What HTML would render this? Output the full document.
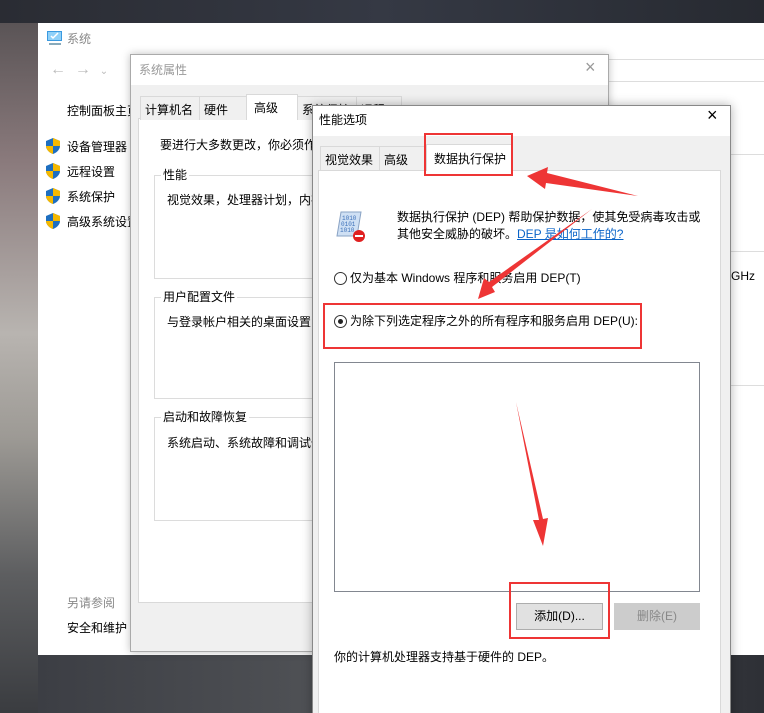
<!DOCTYPE html>
<html style="width:764px;height:713px;overflow:hidden"><head><meta charset="utf-8"><style>
*{margin:0;padding:0;box-sizing:border-box}
body{width:764px;height:713px;overflow:hidden;position:relative;font-family:"Liberation Sans","Noto Sans CJK SC",sans-serif;font-size:12px;color:#000;background:#2b2e36}
.a{position:absolute}
.t{position:absolute;white-space:nowrap;line-height:14px}
.bx{position:absolute;border:1px solid #dcdcdc}
.lg{position:absolute;background:#fff;padding:0 2px;line-height:14px;top:-8px;left:6px}
.tab{position:absolute;height:24px;border:1px solid #d9d9d9;border-bottom:none;background:#f0f0f0;padding:4px 4px 0;white-space:nowrap;font-size:12px}
.red{position:absolute;border:2px solid #ee3535}
.sh{position:absolute;width:14px;height:16px}
</style></head><body>
<div class="a" style="left:0;top:0;width:764px;height:23px;background:linear-gradient(90deg,#2a2c33,#353944 50%,#272a31)"></div>
<div class="a" style="left:0;top:23px;width:38px;height:690px;background:linear-gradient(180deg,#5a5456 0%,#8a7a7c 20%,#b8b4b0 45%,#9d9a95 60%,#5d5e60 80%,#3a3c40 100%)"></div>
<div class="a" style="left:38px;top:655px;width:726px;height:58px;background:linear-gradient(90deg,#3c3e44,#505256 40%,#2e3036)"></div>
<div class="a" style="left:38px;top:23px;width:726px;height:632px;background:#fff"></div>
<svg class="a" style="left:46px;top:30px" width="18" height="16"><rect x="1" y="1" width="15" height="10" fill="#3b9ae0"/><rect x="2" y="2" width="13" height="8" fill="#8fd0f8"/><path d="M5 6l2 2 5-5" stroke="#fff" stroke-width="1.5" fill="none"/><rect x="3" y="13" width="12" height="2" fill="#8ab"/></svg>
<div class="t" style="left:67px;top:32px;color:#888">系统</div>
<div class="t" style="left:50px;top:63px;color:#bbb;font-size:16px">← &nbsp;→ &nbsp;<span style="font-size:10px">⌄</span></div>
<div class="t" style="left:67px;top:104px;color:#000">控制面板主页</div>
<div class="t" style="left:67px;top:140px">设备管理器</div>
<div class="t" style="left:67px;top:165px">远程设置</div>
<div class="t" style="left:67px;top:190px">系统保护</div>
<div class="t" style="left:67px;top:215px">高级系统设置</div>
<svg class="sh" style="left:46px;top:138px"><path d="M7 0L14 3V8C14 12 10 15 7 16C4 15 0 12 0 8V3Z" fill="#1e6fc0"/><path d="M7 0V8H14V3Z M0 8H7V16C4 15 0 12 0 8Z" fill="#f5b800"/></svg>
<svg class="sh" style="left:46px;top:163px"><path d="M7 0L14 3V8C14 12 10 15 7 16C4 15 0 12 0 8V3Z" fill="#1e6fc0"/><path d="M7 0V8H14V3Z M0 8H7V16C4 15 0 12 0 8Z" fill="#f5b800"/></svg>
<svg class="sh" style="left:46px;top:188px"><path d="M7 0L14 3V8C14 12 10 15 7 16C4 15 0 12 0 8V3Z" fill="#1e6fc0"/><path d="M7 0V8H14V3Z M0 8H7V16C4 15 0 12 0 8Z" fill="#f5b800"/></svg>
<svg class="sh" style="left:46px;top:213px"><path d="M7 0L14 3V8C14 12 10 15 7 16C4 15 0 12 0 8V3Z" fill="#1e6fc0"/><path d="M7 0V8H14V3Z M0 8H7V16C4 15 0 12 0 8Z" fill="#f5b800"/></svg>
<div class="t" style="left:67px;top:596px;color:#888">另请参阅</div>
<div class="t" style="left:67px;top:621px">安全和维护</div>
<div class="a" style="left:608px;top:59px;width:156px;height:1px;background:#ddd"></div>
<div class="a" style="left:608px;top:81px;width:156px;height:1px;background:#ddd"></div>
<div class="a" style="left:731px;top:154px;width:33px;height:1px;background:#ddd"></div>
<div class="a" style="left:731px;top:251px;width:33px;height:1px;background:#ddd"></div>
<div class="a" style="left:731px;top:385px;width:33px;height:1px;background:#ddd"></div>
<div class="t" style="left:731px;top:269px">GHz</div>
<div class="a" style="left:130px;top:54px;width:479px;height:598px;background:#f0f0f0;border:1px solid #aaa;box-shadow:0 0 8px rgba(0,0,0,.25)"></div>
<div class="a" style="left:131px;top:55px;width:477px;height:30px;background:#fff"></div>
<div class="t" style="left:139px;top:63px;color:#999">系统属性</div>
<div class="t" style="left:585px;top:60px;color:#999;font-size:18px">×</div>
<div class="a" style="left:138px;top:118px;width:470px;height:485px;background:#fff;border:1px solid #d9d9d9"></div>
<div class="tab" style="left:140px;top:96px;width:60px">计算机名</div>
<div class="tab" style="left:199px;top:96px;width:48px">硬件</div>
<div class="tab" style="left:246px;top:94px;width:52px;height:25px;background:#fff;padding-left:7px">高级</div>
<div class="tab" style="left:297px;top:96px;width:60px">系统保护</div>
<div class="tab" style="left:356px;top:96px;width:46px">远程</div>
<div class="t" style="left:160px;top:138px">要进行大多数更改，你必须作为管理员登录。</div>
<div class="bx" style="left:154px;top:175px;width:170px;height:104px"><span class="lg">性能</span></div>
<div class="t" style="left:167px;top:193px">视觉效果，处理器计划，内存使用</div>
<div class="bx" style="left:154px;top:297px;width:170px;height:102px"><span class="lg">用户配置文件</span></div>
<div class="t" style="left:167px;top:315px">与登录帐户相关的桌面设置</div>
<div class="bx" style="left:154px;top:417px;width:170px;height:104px"><span class="lg">启动和故障恢复</span></div>
<div class="t" style="left:167px;top:436px">系统启动、系统故障和调试信息</div>
<div class="a" style="left:312px;top:105px;width:419px;height:620px;background:#f0f0f0;border:1px solid #888;box-shadow:0 0 10px rgba(0,0,0,.3)"></div>
<div class="a" style="left:313px;top:106px;width:417px;height:30px;background:#fff"></div>
<div class="t" style="left:319px;top:113px">性能选项</div>
<div class="t" style="left:707px;top:108px;font-size:18px">×</div>
<div class="a" style="left:318px;top:170px;width:403px;height:560px;background:#fff;border:1px solid #d9d9d9"></div>
<div class="tab" style="left:320px;top:146px;width:60px">视觉效果</div>
<div class="tab" style="left:379px;top:146px;width:48px">高级</div>
<div class="tab" style="left:426px;top:144px;width:86px;height:27px;background:#fff;padding-top:5px;padding-left:7px">数据执行保护</div>
<svg class="a" style="left:333px;top:210px" width="36" height="34"><path d="M8 2H28L24 26H4Z" fill="#cfe0f4" stroke="#8aa3c4"/><text x="9" y="10" font-size="6" fill="#3b6fb8" font-family="Liberation Mono">1010</text><text x="8" y="16" font-size="6" fill="#3b6fb8" font-family="Liberation Mono">0101</text><text x="7" y="22" font-size="6" fill="#3b6fb8" font-family="Liberation Mono">1010</text><circle cx="26" cy="26" r="6" fill="#e02020"/><rect x="22" y="25" width="8" height="2" fill="#fff"/></svg>
<div class="t" style="left:397px;top:209px;line-height:17px">数据执行保护 (DEP) 帮助保护数据，使其免受病毒攻击或<br>其他安全威胁的破坏。<span style="color:#0a64c8;text-decoration:underline">DEP 是如何工作的?</span></div>
<div class="a" style="left:334px;top:272px;width:13px;height:13px;border:1px solid #333;border-radius:50%;background:#fff"></div>
<div class="t" style="left:350px;top:271px">仅为基本 Windows 程序和服务启用 DEP(T)</div>
<div class="a" style="left:334px;top:315px;width:13px;height:13px;border:1px solid #333;border-radius:50%;background:#fff"></div>
<div class="a" style="left:338px;top:319px;width:5px;height:5px;border-radius:50%;background:#222"></div>
<div class="t" style="left:350px;top:314px">为除下列选定程序之外的所有程序和服务启用 DEP(U):</div>
<div class="a" style="left:334px;top:362px;width:366px;height:230px;border:1px solid #828790;background:#fff"></div>
<div class="a" style="left:516px;top:603px;width:87px;height:27px;border:1px solid #adadad;background:#e1e1e1;text-align:center;line-height:25px">添加(D)...</div>
<div class="a" style="left:614px;top:603px;width:86px;height:27px;border:1px solid #ccc;background:#ccc;color:#888;text-align:center;line-height:25px">删除(E)</div>
<div class="t" style="left:334px;top:650px">你的计算机处理器支持基于硬件的 DEP。</div>
<div class="red" style="left:424px;top:133px;width:89px;height:43px"></div>
<div class="red" style="left:323px;top:303px;width:319px;height:46px"></div>
<div class="red" style="left:509px;top:582px;width:101px;height:57px"></div>
<svg class="a" style="left:0;top:0" width="764" height="713">
<polygon points="527,176 548,167 547,173 638,196 546,183 545,189" fill="#ee3535"/>
<polygon points="478,299 484,278 489,282 592,209 492,287 495,292" fill="#ee3535"/>
<polygon points="543,546 533,520 539,520 516,402 543,519 548,518" fill="#ee3535"/>
</svg>
</body></html>
